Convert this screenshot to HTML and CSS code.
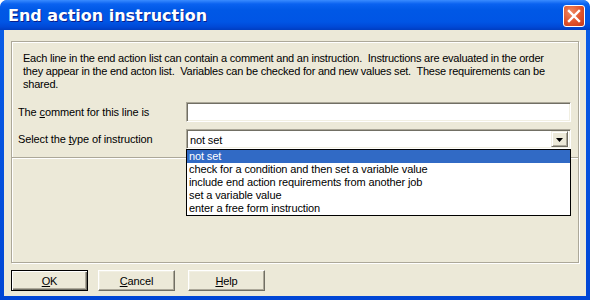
FILE: index.html
```html
<!DOCTYPE html>
<html>
<head>
<meta charset="utf-8">
<link rel="stylesheet" href="styles.css">
</head>
<body>
<div class="window">
  <div class="titlebar">
    <span class="title">End action instruction</span>
    <span class="close"><svg width="14" height="14" viewBox="0 0 14 14"><path d="M2 2 L12 12 M12 2 L2 12" stroke="#fff" stroke-width="2.4" stroke-linecap="square"/></svg></span>
  </div>
  <div class="client">
    <div class="group">
      <p class="intro">Each line in the end action list can contain a comment and an instruction.&nbsp; Instructions are evaluated in the order<br>they appear in the end acton list.&nbsp; Variables can be checked for and new values set.&nbsp; These requirements can be<br>shared.</p>
      <div class="row">
        <span class="label">The <u>c</u>omment for this line is</span>
        <div class="field"></div>
      </div>
      <div class="row row2">
        <span class="label">Select the <u>t</u>ype of instruction</span>
        <div class="combo">
          <span class="combo-text">not set</span>
          <span class="combo-btn"><svg width="7" height="4" viewBox="0 0 7 4"><path d="M0 0 H7 L3.5 4 Z" fill="#000"/></svg></span>
          <ul class="dropdown">
            <li class="sel">not set</li>
            <li>check for a condition and then set a variable value</li>
            <li>include end action requirements from another job</li>
            <li>set a variable value</li>
            <li>enter a free form instruction</li>
          </ul>
        </div>
      </div>
      <div class="sep"></div>
    </div>
    <div class="buttons">
      <button class="btn default"><u>O</u>K</button>
      <button class="btn"><u>C</u>ancel</button>
      <button class="btn help"><u>H</u>elp</button>
    </div>
  </div>
</div>
</body>
</html>
```

FILE: styles.css
```css
html, body {
  margin: 0;
  padding: 0;
  background: #ffffff;
}
.window {
  width: 590px;
  height: 300px;
  box-sizing: border-box;
  display: flex;
  flex-direction: column;
  background: linear-gradient(#0A5FE8, #0046D5);
  border-radius: 7px 7px 0 0;
  overflow: hidden;
  font-family: "Liberation Sans", Arial, sans-serif;
  font-size: 11px;
  color: #000;
}
.titlebar {
  height: 30px;
  flex: none;
  display: flex;
  align-items: center;
  justify-content: space-between;
  padding: 0 5px 0 8px;
  background: linear-gradient(#3A8CFF 0px, #0A62F0 4px, #0058E6 10px, #0055E5 22px, #0048D6 27px, #003DC0 30px);
  border-radius: 7px 7px 0 0;
}
.title {
  color: #fff;
  font-family: "DejaVu Sans", sans-serif;
  font-weight: bold;
  font-size: 16px;
  text-shadow: 1px 1px 0 #0A1E8C;
  padding-top: 1px;
}
.close {
  width: 20px;
  height: 20px;
  border: 1px solid #fff;
  border-radius: 3px;
  background: radial-gradient(circle at 35% 30%, #F08A63, #E0532B 55%, #C4361A);
  display: flex;
  align-items: center;
  justify-content: center;
  margin-top: 1px;
}
.client {
  flex: 1;
  margin: 0 4px 4px 4px;
  background: #ECE9D8;
  display: flex;
  flex-direction: column;
  padding: 11px 7px 0 7px;
  letter-spacing: -0.12px;
}
.group {
  position: relative;
  height: 222px;
  box-sizing: border-box;
  border: 1px solid #ACA899;
  box-shadow: 1px 1px 0 #fff, inset 1px 1px 0 #fff;
  padding: 10px 0 0 11px;
}
.intro {
  margin: 0;
  line-height: 13px;
  white-space: nowrap;
  letter-spacing: -0.22px;
}
.row {
  display: flex;
  align-items: center;
  margin-top: 11px;
  margin-left: -5px;
  height: 20px;
}
.row2 {
  margin-top: 7px;
}
.label {
  width: 168px;
  flex: none;
}
u {
  text-decoration: underline;
  text-underline-offset: 1px;
}
.field, .combo {
  width: 385px;
  height: 20px;
  box-sizing: border-box;
  background: #fff;
  border: 1px solid;
  border-color: #ACA899 #fff #fff #ACA899;
  box-shadow: inset 1px 1px 0 #716F64, inset -1px -1px 0 #F1EFE2;
}
.combo {
  position: relative;
  display: flex;
  align-items: center;
  justify-content: space-between;
  padding: 0 2px 0 3px;
}
.combo-text {
  padding-top: 1px;
}
.combo-btn {
  width: 17px;
  height: 16px;
  box-sizing: border-box;
  background: #ECE9D8;
  border: 1px solid;
  border-color: #F1EFE2 #716F64 #716F64 #F1EFE2;
  box-shadow: inset 1px 1px 0 #fff, inset -1px -1px 0 #ACA899;
  display: flex;
  align-items: center;
  justify-content: center;
  padding-top: 1px;
}
.dropdown {
  position: absolute;
  left: -1px;
  top: 19px;
  width: 385px;
  box-sizing: border-box;
  margin: 0;
  padding: 0;
  list-style: none;
  background: #fff;
  border: 1px solid #000;
  z-index: 2;
}
.dropdown li {
  height: 13px;
  line-height: 13px;
  padding-left: 2px;
}
.dropdown li.sel {
  background: #316AC5;
  color: #fff;
}
.sep {
  margin: 8px 0 0 -11px;
  height: 1px;
  background: #ACA899;
  box-shadow: 0 1px 0 #fff;
}
.buttons {
  display: flex;
  gap: 10px;
  margin-top: 7px;
}
.btn {
  width: 77px;
  height: 21px;
  box-sizing: border-box;
  font-family: "Liberation Sans", Arial, sans-serif;
  font-size: 11px;
  letter-spacing: -0.12px;
  color: #000;
  background: #ECE9D8;
  border: 1px solid;
  border-color: #fff #716F64 #716F64 #fff;
  box-shadow: inset -1px -1px 0 #ACA899, inset 1px 1px 0 #F1EFE2;
  padding: 0;
}
.btn.default {
  border: 1px solid #000;
  box-shadow: inset 1px 1px 0 #fff, inset -1px -1px 0 #716F64, inset -2px -2px 0 #ACA899;
}
.btn.help {
  margin-left: 3px;
}
```
